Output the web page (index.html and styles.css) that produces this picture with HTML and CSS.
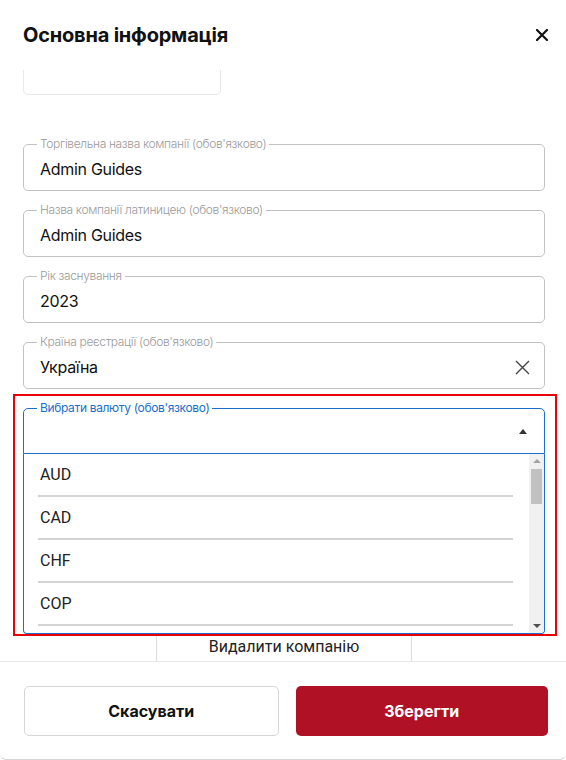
FILE: index.html
```html
<!DOCTYPE html>
<html lang="uk">
<head>
    <meta charset="UTF-8">
    <meta name="viewport" content="width=device-width, initial-scale=1.0">
    <title>Основна інформація</title>
    <link rel="stylesheet" href="styles.css">
</head>
<body>

    <div class="dialog">
        <header class="dialog-header">
            <h2 class="dialog-title">Основна інформація</h2>
            <button class="close-btn" aria-label="Закрити">
                <svg width="12" height="12" viewBox="0 0 12 12"><path d="M1 1L11 11M11 1L1 11" stroke="#111" stroke-width="2.2" stroke-linecap="round"/></svg>
            </button>
        </header>

        <div class="dialog-body">
            <!-- logo upload box, scrolled mostly out of view -->
            <div class="logo-box"></div>

            <fieldset class="field field-first">
                <legend>Торгівельна назва компанії (обов'язково)</legend>
                <div class="field-row"><span class="field-value">Admin Guides</span></div>
            </fieldset>

            <fieldset class="field">
                <legend>Назва компанії латиницею (обов'язково)</legend>
                <div class="field-row"><span class="field-value">Admin Guides</span></div>
            </fieldset>

            <fieldset class="field">
                <legend>Рік заснування</legend>
                <div class="field-row"><span class="field-value">2023</span></div>
            </fieldset>

            <fieldset class="field">
                <legend>Країна реєстрації (обов'язково)</legend>
                <div class="field-row">
                    <span class="field-value">Україна</span>
                    <svg class="clear-icon" width="15" height="15" viewBox="0 0 15 15"><path d="M1 1L14 14M14 1L1 14" stroke="#444" stroke-width="1.4"/></svg>
                </div>
            </fieldset>

            <div class="select-wrap">
                <fieldset class="field field-focused">
                    <legend>Вибрати валюту (обов'язково)</legend>
                    <div class="field-row">
                        <span class="field-value"></span>
                        <span class="caret"></span>
                    </div>
                </fieldset>

                <div class="select-menu">
                    <ul class="menu-list">
                        <li>AUD</li>
                        <li>CAD</li>
                        <li>CHF</li>
                        <li>COP</li>
                    </ul>
                    <div class="scrollbar">
                        <span class="scroll-up"></span>
                        <span class="scroll-thumb"></span>
                        <span class="scroll-down"></span>
                    </div>
                </div>

                <div class="highlight-frame"></div>
            </div>

            <div class="danger-row">
                <button class="delete-btn">Видалити компанію</button>
            </div>
        </div>

        <footer class="dialog-footer">
            <button class="btn btn-outline">Скасувати</button>
            <button class="btn btn-primary">Зберегти</button>
        </footer>
    </div>

</body>
</html>
```

FILE: styles.css
```css
/* General Styles */
* {
    box-sizing: border-box;
}

body {
    margin: 0;
    padding: 0;
    background: #ffffff;
    font-family: 'Inter', 'Roboto', sans-serif;
    color: #111;
}

.dialog {
    height: 760px;
    display: flex;
    flex-direction: column;
    border-bottom: 1px solid #d4d4d4;
    border-radius: 0 0 6px 6px;
    overflow: hidden;
}

/* Header */
.dialog-header {
    height: 70px;
    flex-shrink: 0;
    display: flex;
    align-items: center;
    justify-content: space-between;
    padding: 0 18px 0 23px;
}

.dialog-title {
    margin: 0;
    font-size: 20px;
    font-weight: 700;
    letter-spacing: -0.2px;
    color: #111;
}

.close-btn {
    background: none;
    border: none;
    padding: 0;
    width: 12px;
    height: 12px;
    display: flex;
    cursor: pointer;
}

/* Body */
.dialog-body {
    flex: 1;
    overflow: hidden;
    padding: 0 21px 0 23px;
}

.logo-box {
    width: 198px;
    height: 55px;
    margin-top: -30px;
    border: 1px solid #e8e8e8;
    border-radius: 5px;
}

/* Outlined fields */
.field {
    margin: 12px 0 0;
    padding: 0 12px 3px 13px;
    min-width: 0;
    border: 1px solid #c2c2c2;
    border-radius: 5px;
}

.field-first {
    margin-top: 42px;
}

.field legend {
    padding: 0 3px;
    font-size: 12px;
    line-height: 14px;
    font-weight: 300;
    letter-spacing: -0.35px;
    color: #9a9a9a;
}

.field-row {
    height: 36px;
    display: flex;
    align-items: center;
    justify-content: space-between;
    padding-left: 3px;
}

.field-value {
    font-size: 16px;
    letter-spacing: -0.3px;
    color: #111;
}

.clear-icon {
    margin-right: 2px;
}

/* Currency select, opened */
.select-wrap {
    position: relative;
}

.field-focused {
    border-color: #1a70c9;
    border-radius: 5px 5px 0 0;
    padding-bottom: 0;
}

.field-focused legend {
    color: #1a70c9;
    font-weight: 400;
}

.field-focused .field-row {
    height: 38px;
}

.caret {
    width: 0;
    height: 0;
    margin: 0 5px 6px 0;
    border-left: 4.5px solid transparent;
    border-right: 4.5px solid transparent;
    border-bottom: 5px solid #333;
}

.select-menu {
    position: absolute;
    top: 100%;
    left: 0;
    right: 0;
    height: 180px;
    display: flex;
    background: #fff;
    border: 1px solid #1a70c9;
    border-top: none;
    border-radius: 0 0 4px 4px;
    overflow: hidden;
    z-index: 2;
}

.menu-list {
    flex: 1;
    list-style-type: none;
    margin: 0;
    padding: 0 16px 0 14px;
    overflow: hidden;
}

.menu-list li {
    padding: 11px 0 10px 2px;
    line-height: 20px;
    font-family: 'Roboto', sans-serif;
    font-size: 16px;
    color: #222;
    border-bottom: 2px solid #d4d4d4;
}

/* Fake classic scrollbar */
.scrollbar {
    width: 15px;
    flex-shrink: 0;
    display: flex;
    flex-direction: column;
    align-items: center;
    background: #f1f1f1;
}

.scroll-up,
.scroll-down {
    width: 0;
    height: 0;
    border-left: 4px solid transparent;
    border-right: 4px solid transparent;
}

.scroll-up {
    margin-top: 5px;
    border-bottom: 4px solid #a3a3a3;
}

.scroll-thumb {
    width: 11px;
    height: 35px;
    margin-top: 6px;
    background: #c1c1c1;
}

.scroll-down {
    margin-top: auto;
    margin-bottom: 5px;
    border-top: 4px solid #505050;
}

/* Red annotation frame round the select */
.highlight-frame {
    position: absolute;
    top: -7px;
    left: -10px;
    right: -12px;
    height: 242px;
    border: 2px solid #e8000b;
    pointer-events: none;
    z-index: 3;
}

/* Delete button, partly covered by the menu */
.danger-row {
    display: flex;
    justify-content: center;
    margin-top: 173px;
}

.delete-btn {
    width: 256px;
    height: 40px;
    background: #fff;
    border: 1px solid #dcdcdc;
    border-radius: 4px;
    font-family: 'Roboto', sans-serif;
    font-size: 16px;
    color: #222;
    padding-top: 0;
}

/* Footer */
.dialog-footer {
    flex-shrink: 0;
    display: flex;
    gap: 17px;
    padding: 24px 18px 23px 24px;
    border-top: 1px solid #e9e9e9;
}

.btn {
    flex: 1;
    height: 50px;
    border-radius: 5px;
    font-family: 'Inter', sans-serif;
    font-size: 16px;
    font-weight: 700;
    cursor: pointer;
}

.btn-outline {
    background: #fff;
    border: 1px solid #d6d6d6;
    color: #111;
}

.btn-primary {
    background: #b01124;
    border: none;
    color: #fff;
}
```
